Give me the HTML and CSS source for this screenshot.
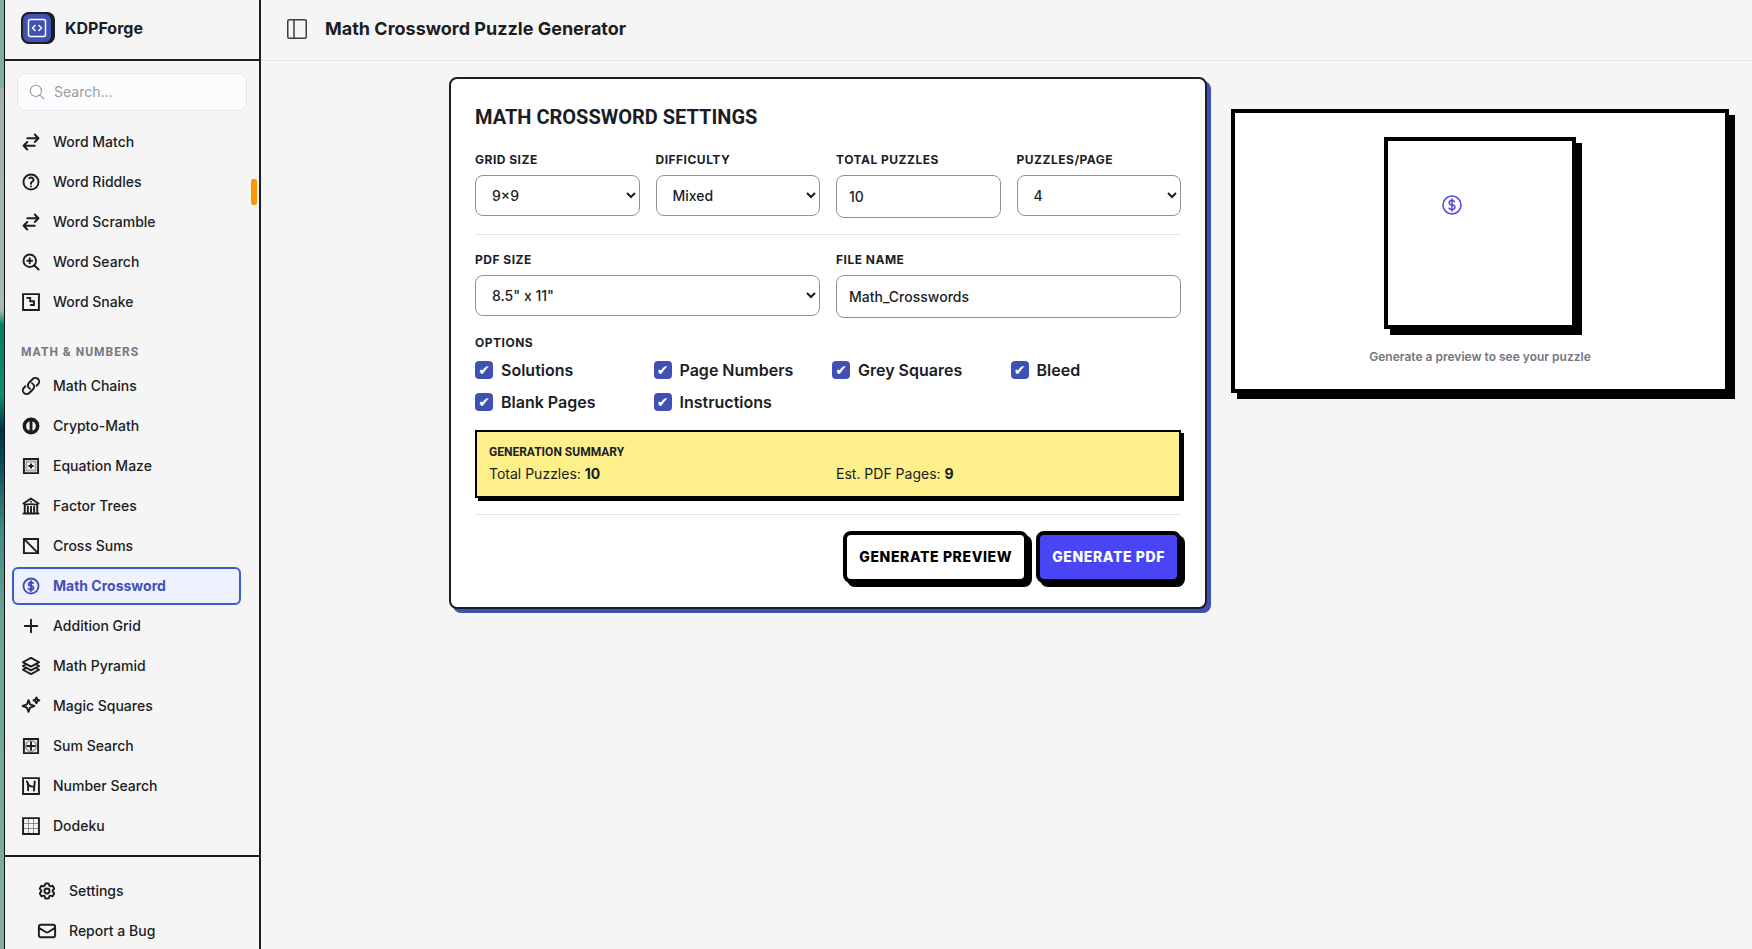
FILE: index.html
```html
<!DOCTYPE html>
<html lang="en">
<head>
<meta charset="utf-8">
<meta name="viewport" content="width=device-width, initial-scale=1">
<title>Math Crossword Puzzle Generator - KDPForge</title>
<link rel="stylesheet" href="styles.css">
</head>
<body>
<div class="desktop-edge"></div>
<aside class="sidebar">
  <div class="brand">
    <span class="brand-logo">
      <svg viewBox="0 0 20 20" width="20" height="20"><rect x="1.5" y="1.5" width="17" height="17" rx="2"/><path d="M8 7.5 5.5 10 8 12.5M12 7.5l2.500 2.500-2.500 2.500"/></svg>
    </span>
    <span class="brand-name">KDPForge</span>
  </div>
  <label class="search">
    <svg class="search-icon" viewBox="0 0 24 24"><path d="m21 21-5.197-5.197m0 0A7.500 7.500 0 1 0 5.196 5.196a7.500 7.500 0 0 0 10.607 10.607Z"/></svg>
    <input class="search-input" type="search" placeholder="Search..." aria-label="Search">
  </label>
  <div class="scroll-thumb"></div>
  <nav class="nav">
    <a class="nav-item" href="#"><svg class="icon" viewBox="0 0 24 24"><path d="M7.500 21 3 16.500m0 0L7.500 12M3 16.500h13.500m0-13.500L21 7.500m0 0L16.500 12M21 7.500H7.500"/></svg>Word Match</a>
    <a class="nav-item" href="#"><svg class="icon" viewBox="0 0 24 24"><path d="M9.879 7.519c1.171-1.025 3.071-1.025 4.242 0 1.172 1.025 1.172 2.687 0 3.712-.203.179-.43.326-.67.442-.745.361-1.450.999-1.450 1.827v.75M21 12a9 9 0 1 1-18 0 9 9 0 0 1 18 0Zm-9 5.250h.008v.008H12v-.008Z"/></svg>Word Riddles</a>
    <a class="nav-item" href="#"><svg class="icon" viewBox="0 0 24 24"><path d="M7.500 21 3 16.500m0 0L7.500 12M3 16.500h13.500m0-13.500L21 7.500m0 0L16.500 12M21 7.500H7.500"/></svg>Word Scramble</a>
    <a class="nav-item" href="#"><svg class="icon" viewBox="0 0 24 24"><path d="m21 21-5.197-5.197m0 0A7.500 7.500 0 1 0 5.196 5.196a7.500 7.500 0 0 0 10.607 10.607ZM10.500 7.500v6m3-3h-6"/></svg>Word Search</a>
    <a class="nav-item" href="#"><svg class="icon" viewBox="0 0 24 24"><g class="square-ends"><path d="M2.500 2.500h19v19h-19Z"/><path d="M6.500 7h4.500v4h4.500v4.500H11"/></g></svg>Word Snake</a>
    <h2 class="nav-title">Math &amp; Numbers</h2>
    <a class="nav-item" href="#"><svg class="icon" viewBox="0 0 24 24"><path d="M13.190 8.688a4.500 4.500 0 0 1 1.242 7.244l-4.500 4.500a4.500 4.500 0 0 1-6.364-6.364l1.757-1.757m13.350-.622 1.757-1.757a4.500 4.500 0 0 0-6.364-6.364l-4.500 4.500a4.500 4.500 0 0 0 1.242 7.244"/></svg>Math Chains</a>
    <a class="nav-item" href="#"><svg class="icon" viewBox="0 0 24 24"><circle class="solid" cx="12" cy="12" r="9"/><path class="paper" d="M10.300 6.500C4.800 7.500 4.800 16.500 10.300 17.500ZM13.700 6.500C19.200 7.500 19.200 16.500 13.700 17.500Z"/></svg>Crypto-Math</a>
    <a class="nav-item" href="#"><svg class="icon" viewBox="0 0 24 24"><g class="square-ends"><path class="soft" d="M6.500 6.500h11v11h-11Z"/><path d="M3.500 3.500h17v17h-17Z"/><path d="M12 9v6M9 12h6"/></g></svg>Equation Maze</a>
    <a class="nav-item" href="#"><svg class="icon" viewBox="0 0 24 24"><path d="M12 21v-8.250M15.750 21v-8.250M8.250 21v-8.250M3 9l9-6 9 6m-1.500 12V10.332A48.360 48.360 0 0 0 12 9.750c-2.551 0-5.056.2-7.500.582V21M3 21h18M12 6.750h.008v.008H12V6.750Z"/></svg>Factor Trees</a>
    <a class="nav-item" href="#"><svg class="icon" viewBox="0 0 24 24"><path class="square-ends" d="M3.500 3.500h17v17h-17ZL20.500 20.500"/></svg>Cross Sums</a>
    <a class="nav-item nav-item-active" href="#" aria-current="page"><svg class="icon" viewBox="0 0 24 24"><path d="M12 6v12m-3-2.818.879.659c1.171.879 3.070.879 4.242 0 1.172-.879 1.172-2.303 0-3.182C13.536 12.219 12.768 12 12 12c-.725 0-1.450-.22-2.003-.659-1.106-.879-1.106-2.303 0-3.182s2.900-.879 4.006 0l.415.33M21 12a9 9 0 1 1-18 0 9 9 0 0 1 18 0Z"/></svg>Math Crossword</a>
    <a class="nav-item" href="#"><svg class="icon" viewBox="0 0 24 24"><path d="M12 4.500v15m7.500-7.500h-15"/></svg>Addition Grid</a>
    <a class="nav-item" href="#"><svg class="icon" viewBox="0 0 24 24"><path d="M6.429 9.750 2.250 12l4.179 2.250m0-4.500 5.571 3 5.571-3m-11.142 0L2.250 7.500 12 2.250l9.750 5.250-4.179 2.250m0 0L21.750 12l-4.179 2.250m0 0 4.179 2.250L12 21.750 2.250 16.500l4.179-2.250m11.142 0-5.571 3-5.571-3"/></svg>Math Pyramid</a>
    <a class="nav-item" href="#"><svg class="icon" viewBox="0 0 24 24"><path d="M9 5 10.900 10.100 16 12 10.900 13.900 9 19 7.100 13.900 2 12 7.100 10.100ZM18.500 1.700 19.600 4.100 22 5.200 19.600 6.300 18.500 8.700 17.400 6.300 15 5.200 17.400 4.100Z"/></svg>Magic Squares</a>
    <a class="nav-item" href="#"><svg class="icon" viewBox="0 0 24 24"><circle class="soft" cx="12" cy="12" r="6.500"/><path class="square-ends" d="M3.500 3.500h17v17h-17Z"/><path d="M12 7.500v9M7.500 12h9"/></svg>Sum Search</a>
    <a class="nav-item" href="#"><svg class="icon" viewBox="0 0 24 24"><path class="square-ends" d="M2.500 2.500h19v19h-19Z"/><path d="M7 6.500 8.500 9V17M16.500 6.500 15.500 17.500M8 10l4 2.500 4 .5"/></svg>Number Search</a>
    <a class="nav-item" href="#"><svg class="icon" viewBox="0 0 24 24"><path class="hairline" d="M9 3v18M15 3v18M3 9h18M3 15h18"/><path class="square-ends" d="M2.500 2.500h19v19h-19Z"/></svg>Dodeku</a>
  </nav>
  <div class="sidebar-footer">
    <a class="nav-item" href="#"><svg class="icon" viewBox="0 0 24 24"><path d="M9.594 3.940c.09-.542.56-.94 1.110-.94h2.593c.55 0 1.020.398 1.110.94l.213 1.281c.063.374.313.686.645.87.074.04.147.083.22.127.325.196.72.257 1.075.124l1.217-.456a1.125 1.125 0 0 1 1.370.49l1.296 2.247a1.125 1.125 0 0 1-.26 1.431l-1.003.827c-.293.241-.438.613-.43.992a7.723 7.723 0 0 1 0 .255c-.008.378.137.75.43.991l1.004.827c.424.35.534.955.26 1.430l-1.298 2.247a1.125 1.125 0 0 1-1.369.491l-1.217-.456c-.355-.133-.75-.072-1.076.124a6.470 6.470 0 0 1-.22.128c-.331.183-.581.495-.644.869l-.213 1.281c-.09.543-.56.94-1.110.94h-2.594c-.55 0-1.019-.398-1.110-.94l-.213-1.281c-.062-.374-.312-.686-.644-.87a6.520 6.520 0 0 1-.22-.127c-.325-.196-.72-.257-1.076-.124l-1.217.456a1.125 1.125 0 0 1-1.369-.49l-1.297-2.247a1.125 1.125 0 0 1 .26-1.431l1.004-.827c.292-.24.437-.613.43-.991a6.932 6.932 0 0 1 0-.255c.007-.38-.138-.751-.43-.992l-1.004-.827a1.125 1.125 0 0 1-.26-1.430l1.297-2.247a1.125 1.125 0 0 1 1.370-.491l1.216.456c.356.133.751.072 1.076-.124.072-.044.146-.086.22-.128.332-.183.582-.495.644-.869l.214-1.280Z"/><path d="M15 12a3 3 0 1 1-6 0 3 3 0 0 1 6 0Z"/></svg>Settings</a>
    <a class="nav-item" href="#"><svg class="icon" viewBox="0 0 24 24"><path d="M21.750 6.750v10.500a2.250 2.250 0 0 1-2.250 2.250h-15a2.250 2.250 0 0 1-2.250-2.250V6.750m19.500 0A2.250 2.250 0 0 0 19.500 4.500h-15a2.250 2.250 0 0 0-2.250 2.250m19.500 0v.243a2.250 2.250 0 0 1-1.070 1.916l-7.500 4.615a2.250 2.250 0 0 1-2.360 0L3.320 8.910a2.250 2.250 0 0 1-1.070-1.916V6.750"/></svg>Report a Bug</a>
  </div>
</aside>
<div class="page">
  <header class="topbar">
    <button class="toggle" type="button" aria-label="Toggle sidebar">
      <svg viewBox="0 0 20 20" width="20" height="20"><rect x=".75" y=".75" width="18.500" height="18.500" rx="1.500"/><path d="M7 1v18"/></svg>
    </button>
    <h1 class="page-title">Math Crossword Puzzle Generator</h1>
  </header>
  <main class="content">
    <form class="card">
      <h2 class="card-title">Math Crossword Settings</h2>
      <div class="fields fields-four">
        <div class="field"><label class="label" for="grid">Grid Size</label><select class="control select" id="grid"><option>9×9</option></select></div>
        <div class="field"><label class="label" for="difficulty">Difficulty</label><select class="control select" id="difficulty"><option>Mixed</option></select></div>
        <div class="field"><label class="label" for="total">Total Puzzles</label><input class="control input" id="total" type="number" value="10"></div>
        <div class="field"><label class="label" for="per-page">Puzzles/Page</label><select class="control select" id="per-page"><option>4</option></select></div>
      </div>
      <hr class="divider">
      <div class="fields fields-two">
        <div class="field"><label class="label" for="pdf-size">PDF Size</label><select class="control select" id="pdf-size"><option>8.5" x 11"</option></select></div>
        <div class="field"><label class="label" for="file-name">File Name</label><input class="control input" id="file-name" type="text" value="Math_Crosswords"></div>
      </div>
      <fieldset class="options">
        <legend class="label options-title">Options</legend>
        <div class="options-grid">
          <label class="option"><input class="tick" type="checkbox" checked>Solutions</label>
          <label class="option"><input class="tick" type="checkbox" checked>Page Numbers</label>
          <label class="option"><input class="tick" type="checkbox" checked>Grey Squares</label>
          <label class="option"><input class="tick" type="checkbox" checked>Bleed</label>
          <label class="option"><input class="tick" type="checkbox" checked>Blank Pages</label>
          <label class="option"><input class="tick" type="checkbox" checked>Instructions</label>
        </div>
      </fieldset>
      <section class="summary">
        <h3 class="summary-title">Generation Summary</h3>
        <div class="summary-grid">
          <div>Total Puzzles: <strong>10</strong></div>
          <div>Est. PDF Pages: <strong>9</strong></div>
        </div>
      </section>
      <hr class="divider">
      <div class="actions">
        <button class="button" type="button">Generate Preview</button>
        <button class="button button-primary" type="button">Generate PDF</button>
      </div>
    </form>
    <section class="preview">
      <div class="preview-sheet">
        <svg class="preview-icon" viewBox="0 0 24 24"><path d="M12 6v12m-3-2.818.879.659c1.171.879 3.070.879 4.242 0 1.172-.879 1.172-2.303 0-3.182C13.536 12.219 12.768 12 12 12c-.725 0-1.450-.22-2.003-.659-1.106-.879-1.106-2.303 0-3.182s2.900-.879 4.006 0l.415.33M21 12a9 9 0 1 1-18 0 9 9 0 0 1 18 0Z"/></svg>
      </div>
      <p class="preview-text">Generate a preview to see your puzzle</p>
    </section>
  </main>
</div>
</body>
</html>
```

FILE: styles.css
```css
:root {
  --ink: #1b1d24;
  --indigo: #3f51b5;
  --ground: #f5f5f5;
}

* {
  box-sizing: border-box;
}

body {
  display: flex;
  height: 100vh;
  margin: 0;
  overflow: hidden;
  background: var(--ground);
  color: var(--ink);
  font-family: Inter, "Liberation Sans", sans-serif;
  font-size: 14px;
  line-height: 20px;
}

h1, h2, h3, p {
  margin: 0;
}

svg {
  display: block;
  flex: none;
  fill: none;
  stroke: currentColor;
  stroke-linecap: round;
  stroke-linejoin: round;
}

.desktop-edge {
  flex: none;
  width: 5px;
  border-right: 1px solid #0d0f12;
  background: linear-gradient(#7dae9f 0 85px, #a3afaf 90px, #a5bcb5 310px, #00805f 325px, #0a9070 395px, #04304a 430px, #0a4a58 460px, #3f8c80 530px, #6aa593 620px, #84afa1 949px);
}

.sidebar {
  position: relative;
  display: flex;
  flex: none;
  flex-direction: column;
  width: 256px;
  border-right: 2px solid var(--ink);
}

.brand {
  display: flex;
  flex: none;
  align-items: center;
  gap: 12px;
  height: 61px;
  padding: 0 16px 3px;
  border-bottom: 2px solid var(--ink);
}

.brand-logo {
  display: grid;
  place-items: center;
  width: 32px;
  height: 32px;
  border: 2px solid var(--ink);
  border-radius: 8px;
  background: var(--indigo);
  box-shadow: 2px 0 0 var(--ink);
  color: #fff;
}

.brand-logo svg {
  stroke-width: 1.5;
}

.brand-name {
  font-size: 16px;
  font-weight: 700;
}

.search {
  display: flex;
  flex: none;
  align-items: center;
  gap: 8px;
  height: 38px;
  margin: 12px 12px 0;
  padding: 0 10px;
  border: 1px solid #e2e5e9;
  border-radius: 8px;
  background: #fafcfd;
}

.search-icon {
  width: 18px;
  height: 18px;
  color: #9a9da2;
  stroke-width: 1.5;
}

.search-input {
  flex: 1;
  min-width: 0;
  padding: 0;
  border: 0;
  outline: 0;
  background: none;
  color: inherit;
  font: inherit;
}

.search-input::placeholder {
  color: #9a9da2;
}

.scroll-thumb {
  position: absolute;
  top: 179px;
  right: 2px;
  width: 6px;
  height: 26px;
  border-radius: 2px;
  background: #ff9800;
}

.nav {
  display: flex;
  flex: none;
  flex-direction: column;
  gap: 2px;
  padding: 12px 18px 10px 7px;
}

.nav-item {
  display: flex;
  align-items: center;
  gap: 12px;
  height: 38px;
  padding: 0 7px;
  border: 2px solid transparent;
  border-radius: 6px;
  color: var(--ink);
  font-weight: 500;
  text-decoration: none;
}

.nav-item-active {
  border-color: #3a5dcb;
  background: #eff1fe;
  color: #4350b6;
  font-weight: 700;
}

.nav-title {
  padding: 21px 9px 5px;
  color: #747882;
  font-family: Roboto, sans-serif;
  font-size: 12px;
  font-weight: 700;
  letter-spacing: 1px;
  line-height: 16px;
  text-transform: uppercase;
}

.icon {
  width: 20px;
  height: 20px;
  stroke-width: 2.3;
}

.square-ends {
  stroke-linecap: butt;
  stroke-linejoin: miter;
}

.solid {
  fill: currentColor;
}

.paper {
  fill: var(--ground);
  stroke: none;
}

.soft {
  stroke: #a3a4aa;
}

.hairline {
  stroke: #777980;
  stroke-width: 1;
}

.sidebar-footer {
  display: flex;
  flex: none;
  flex-direction: column;
  gap: 2px;
  padding: 15px 23px;
  border-top: 2px solid var(--ink);
}

.page {
  flex: 1;
  min-width: 0;
}

.topbar {
  display: flex;
  align-items: center;
  gap: 18px;
  height: 61px;
  padding: 0 26px 3px;
  border-bottom: 1px solid #e6e6e8;
}

.toggle {
  padding: 0;
  border: 0;
  background: none;
  color: #3b3d43;
  stroke-width: 1.5;
}

.page-title {
  font-size: 18px;
  font-weight: 700;
  line-height: 28px;
}

.content {
  display: grid;
  grid-template-columns: minmax(0, 758fr) minmax(0, 498fr);
  align-items: start;
  gap: 24px;
  padding: 16px 23px 16px 188px;
}

.card {
  padding: 24px;
  border: 2px solid var(--ink);
  border-radius: 8px;
  background: #fff;
  box-shadow: 4px 4px 0 var(--indigo);
}

.card-title {
  margin-bottom: 20px;
  font-family: Roboto, sans-serif;
  font-size: 20px;
  font-weight: 700;
  line-height: 28px;
  text-transform: uppercase;
}

.fields {
  display: grid;
  align-items: start;
  gap: 16px;
}

.fields-four {
  grid-template-columns: repeat(4, minmax(0, 1fr));
}

.fields-two {
  grid-template-columns: repeat(2, minmax(0, 1fr));
}

.field {
  display: grid;
  gap: 6px;
}

.label {
  font-size: 12px;
  font-weight: 700;
  letter-spacing: 0.5px;
  line-height: 18px;
  text-transform: uppercase;
}

.control {
  width: 100%;
  border: 1px solid #909196;
  border-radius: 8px;
  background-color: #fff;
  color: var(--ink);
  font: inherit;
  font-weight: 500;
}

.select {
  height: 41px;
  padding: 0 12px;
}

.input {
  height: 43px;
  padding: 0 12px;
}

.divider {
  height: 1px;
  margin: 16px 0;
  border: 0;
  background: #e4e5e8;
}

.options {
  margin: 16px 0;
  padding: 0;
  border: 0;
}

.options-title {
  margin-bottom: 6px;
  padding: 0;
}

.options-grid {
  display: grid;
  grid-template-columns: repeat(4, minmax(0, 1fr));
  gap: 8px;
}

.option {
  display: flex;
  align-items: center;
  gap: 8px;
  font-size: 16px;
  font-weight: 600;
  line-height: 24px;
}

.tick {
  display: grid;
  place-items: center;
  width: 18px;
  height: 18px;
  margin: 0;
  border-radius: 4px;
  background: #fff;
  appearance: none;
}

.tick:checked {
  background: var(--indigo);
}

.tick:checked::before {
  content: "✔";
  color: #fff;
  font: 14px/18px "DejaVu Sans", sans-serif;
}

.summary {
  padding: 12px;
  border: 2px solid #000;
  background: #fdf08a;
  box-shadow: 3px 3px 0 #000;
}

.summary-title {
  margin-bottom: 4px;
  font-family: Roboto, sans-serif;
  font-size: 12px;
  font-weight: 700;
  line-height: 16px;
  text-transform: uppercase;
}

.summary-grid {
  display: grid;
  grid-template-columns: repeat(2, minmax(0, 1fr));
  gap: 16px;
}

.actions {
  display: flex;
  justify-content: flex-end;
  gap: 8px;
}

.button {
  height: 52px;
  padding: 0 12px;
  border: 4px solid #000;
  border-radius: 8px;
  background: #fff;
  box-shadow: 4px 4px 0 #000;
  color: #000;
  font: inherit;
  font-weight: 800;
  letter-spacing: 0.6px;
  text-transform: uppercase;
}

.button-primary {
  background: #4945f7;
  color: #fff;
}

.preview {
  display: flex;
  flex-direction: column;
  align-items: center;
  gap: 20px;
  margin-top: 32px;
  padding: 24px;
  border: 4px solid #000;
  background: #fff;
  box-shadow: 6px 6px 0 #000;
}

.preview-sheet {
  width: 192px;
  height: 192px;
  padding: 52px;
  border: 4px solid #000;
  box-shadow: 6px 6px 0 #000;
}

.preview-icon {
  width: 24px;
  height: 24px;
  color: #4f46e5;
  stroke-width: 1.5;
}

.preview-text {
  color: #74767f;
  font-size: 12px;
  font-weight: 600;
  line-height: 16px;
}
```
